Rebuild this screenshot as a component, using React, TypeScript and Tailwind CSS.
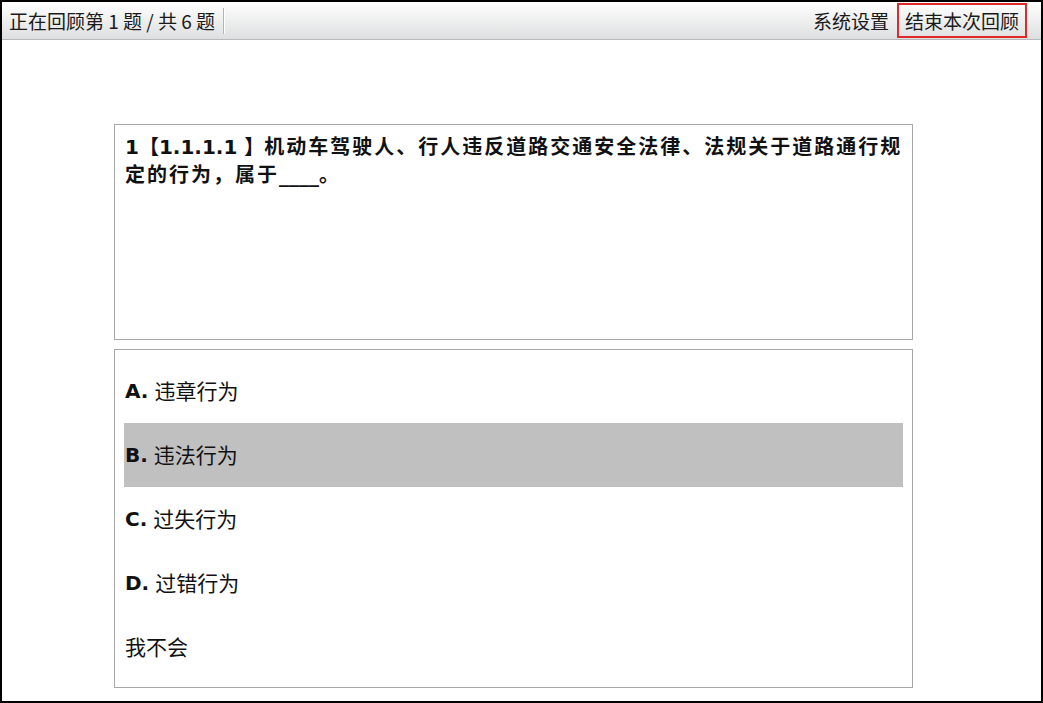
import React from "react";

const cjk = { fontFamily: '"DejaVu Sans", "Noto Sans CJK SC", sans-serif' };

function Option({ label, text, selected }: { label?: string; text: string; selected?: boolean }) {
  return (
    <div className={`h-[64px] flex items-center ${selected ? "bg-[#c0c0c0]" : ""}`}>
      {label && (
        <span className="pl-[1px] mr-[6px] text-[20px] font-bold text-[#111]" style={cjk}>
          {label}
        </span>
      )}
      <span
        className={`${label ? "" : "pl-[1px]"} text-[21px] text-[#111]`}
        style={{ fontFamily: '"Noto Sans CJK SC", sans-serif' }}
      >
        {text}
      </span>
    </div>
  );
}

export default function App() {
  return (
    <div className="w-[1043px] h-[703px] box-border border-2 border-black bg-white overflow-hidden relative">
      <div
        className="h-[38px] flex items-stretch justify-between border-b border-[#b8b8b8] bg-gradient-to-b from-[#ffffff] to-[#dedfe0] text-[19px] text-[#1a1a1a]"
        style={{ fontFamily: '"Noto Sans CJK SC", sans-serif' }}
      >
        <div className="flex items-center">
          <span className="pl-[7px] pr-[8px] leading-none">正在回顾第 1 题 / 共 6 题</span>
          <div className="h-[26px] w-[2px] border-l border-[#b4b4b4] bg-white" />
        </div>
        <div className="flex items-center pr-[14px]">
          <span className="mr-[8px] leading-none">系统设置</span>
          <div className="h-[35px] mt-[-1px] w-[130px] border-2 border-[#e02a2a] flex items-center justify-center leading-none">
            结束本次回顾
          </div>
        </div>
      </div>

      <div className="ml-[112px] mt-[84px] w-[799px]">
        <div className="h-[216px] border border-[#a8a8a8] pl-[10px] pr-[8px] pt-[8px]">
          <p className="text-[20px] font-bold leading-[28px] tracking-[2px] text-[#111]" style={cjk}>
            <span className="tracking-normal">1【1.1.1.1 】</span>机动车驾驶人、行人违反道路交通安全法律、法规关于道路通行规定的行为，属于<span className="tracking-normal">____</span>。
          </p>
        </div>
        <div className="h-[339px] mt-[9px] border border-[#a8a8a8] px-[9px] pt-[9px]">
          <Option label="A." text="违章行为" />
          <Option label="B." text="违法行为" selected />
          <Option label="C." text="过失行为" />
          <Option label="D." text="过错行为" />
          <Option text="我不会" />
        </div>
      </div>
    </div>
  );
}
